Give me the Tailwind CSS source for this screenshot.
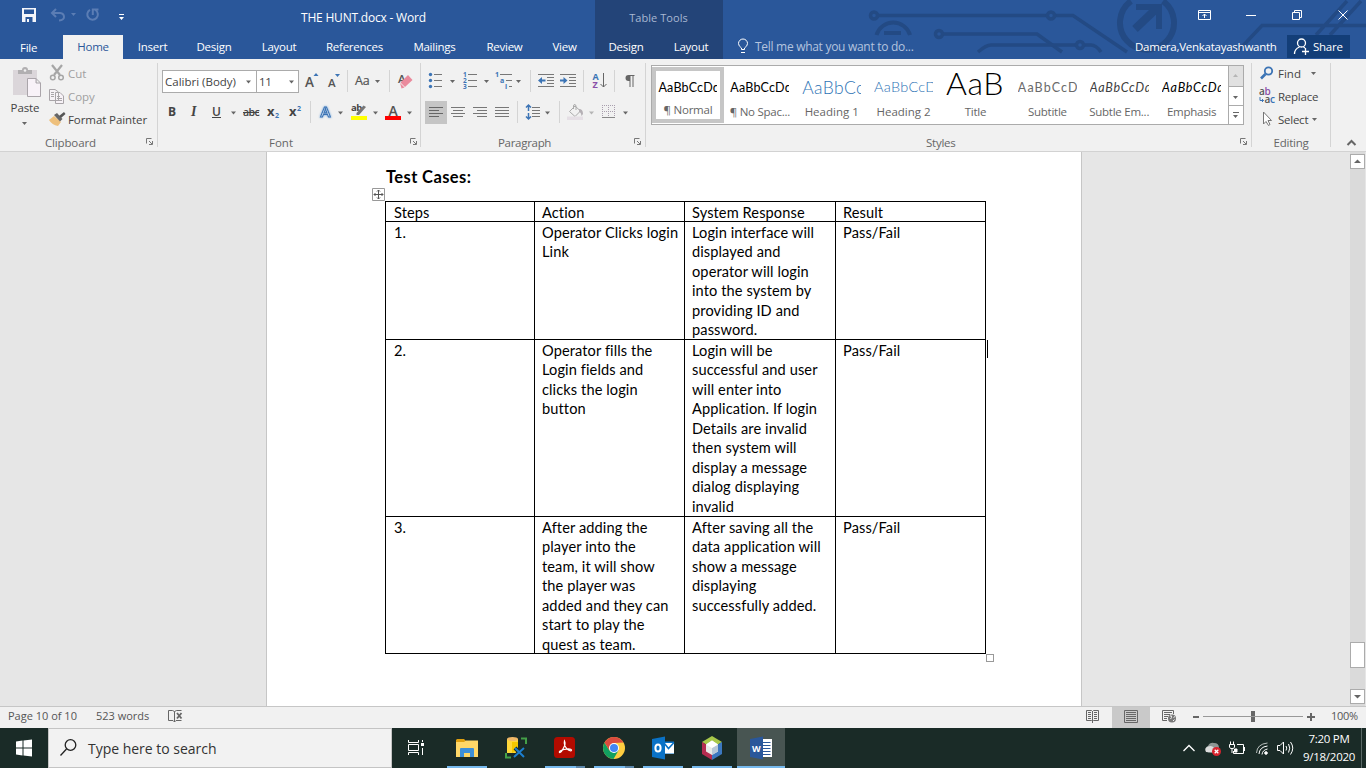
<!DOCTYPE html>
<html lang="en">
<head>
<meta charset="utf-8">
<title>THE HUNT.docx - Word</title>
<script src="https://cdn.jsdelivr.net/npm/@tailwindcss/browser@4"></script>
</head>
<body class="w-[1366px] h-[768px] overflow-hidden bg-[#e6e6e6] font-['Open_Sans','Noto_Sans',sans-serif] text-[11.5px] tracking-[-0.25px] text-[#444] flex flex-col whitespace-nowrap">

<!-- Title bar and tabs -->
<header class="relative flex h-[59px] shrink-0 bg-[#2a579a] text-white">
  <svg class="absolute left-[860px] top-0" width="506" height="59" viewBox="860 0 506 59" fill="none" stroke="#234a84" stroke-width="3.5">
    <circle cx="874" cy="15.500" r="3.500"/><path d="M878 15.500H1047M1055 15.500H1073L1127 52"/><circle cx="1051" cy="15.500" r="3.500"/>
    <circle cx="939" cy="34" r="3.500"/><path d="M943 34H1037L1062 52"/>
    <path d="M876.500 35A17.500 17.500 0 0 1 910 35M884 33H901" stroke-width="4"/>
    <path d="M978 52Q986 45 991 45H1076M1084 45H1091Q1096 45 1101 52"/><circle cx="1080" cy="45" r="3.500"/>
    <path d="M1131 1A27 27 0 1 0 1163 1" stroke-width="6"/>
    <path d="M1135 29L1157 8" stroke-width="8"/><path d="M1136 7H1159V29" stroke-width="6"/>
    <path d="M1239 50L1262 25.500H1366M1316 35L1347 1M1330 35L1361 1"/>
  </svg>
  <div class="relative w-[595px] flex flex-col">
    <div class="h-[35px] flex items-start">
      <svg width="301" height="35" viewBox="0 0 301 35" fill="none">
        <path d="M22 8H36V22H22Z" fill="#f4f6fa"/><path d="M24 9.500H34V14H24Z M25.500 17H32.500V22H25.500Z" fill="#2a579a"/><path d="M27 19H29V22H27Z" fill="#f4f6fa"/>
        <g stroke="#5b7db4" stroke-width="2"><path d="M56 9L52 13L56 17M52.500 13H60Q64 13.500 64 17Q64 20 59 20.500"/><path d="M90 9.800A5.300 5.300 0 1 0 95.500 10M92.800 15V9.500H98.500"/></g>
        <path d="M71 13H76L73.500 16Z" fill="#5b7db4"/><path d="M119 14H124V15H119ZM119 17H124L121.500 20Z" fill="#fff"/>
      </svg>
      <span class="mt-[10px] text-[12px] leading-4 tracking-[-0.2px]">THE HUNT.docx - Word</span>
    </div>
    <nav class="h-6 flex text-center leading-6">
      <span class="w-[63px] text-left pl-5 pt-px">File</span>
      <span class="w-[60px] bg-[#f1f1f1] text-[#2a579a]">Home</span>
      <span class="w-[59px]">Insert</span><span class="w-[64px]">Design</span><span class="w-[66px]">Layout</span><span class="w-[85px]">References</span><span class="w-[75px]">Mailings</span><span class="w-[65px]">Review</span><span class="w-[55px]">View</span>
    </nav>
  </div>
  <div class="relative w-[128px] flex flex-col bg-[#234478] text-center">
    <div class="h-[35px] leading-[36px] text-[#a9b8d2] text-[11px] tracking-[0.05px] pr-px">Table Tools</div>
    <nav class="flex leading-6"><span class="w-[62px]">Design</span><span class="w-[68px] -mr-1">Layout</span></nav>
  </div>
  <div class="relative flex-1 flex flex-col">
    <svg class="ml-[467px]" width="176" height="35" viewBox="1190 0 176 35" fill="none" stroke="#fff"><path d="M1198.500 10.500H1210.500V19.500H1198.500ZM1198 12.500H1211M1204.500 18V14M1202.500 16L1204.500 14L1206.500 16M1246 15.500H1256M1292.500 12.500H1299.500V19.500H1292.500ZM1294.500 12V10.500H1301.500V17.500H1300M1338.500 10.500L1347.500 19.500M1347.500 10.500L1338.500 19.500"/></svg>
    <div class="h-6 flex leading-6">
      <svg class="ml-[14px]" width="18" height="24" viewBox="737 35 18 24" fill="none" stroke="#fff"><path d="M741.500 49.500V48Q738.500 46 738.500 43.500A4.500 4.500 0 0 1 747.500 43.500Q747.500 46 744.500 48V49.500ZM741 52.500H745"/></svg>
      <span class="w-[380px] text-[#b4c4df] text-[12px] tracking-[-0.29px]">Tell me what you want to do...</span>
      <span class="w-[152px]">Damera,Venkatayashwanth</span>
      <div class="w-[63px] h-[23px] bg-[#133e78] flex">
        <svg width="26" height="23" viewBox="1287 35 26 23" fill="none" stroke="#fff" stroke-width="1.300"><circle cx="1301.500" cy="43" r="4"/><path d="M1294.500 54Q1294.500 49 1299.500 47M1303.500 47L1305 48M1305.500 48V55M1302 51.500H1309"/></svg>
        <span>Share</span>
      </div>
    </div>
  </div>
</header>

<!-- Ribbon -->
<section class="h-[93px] shrink-0 flex bg-[#f1f1f1] border-b border-[#d2d2d2] pt-1">
  <!-- Clipboard -->
  <div class="w-[158px] h-[84px] flex flex-col border-r border-[#d4d4d4]">
    <div class="h-[73px] flex">
      <div class="w-[49px] flex flex-col items-center">
        <svg width="49" height="36" viewBox="0 63 49 36"><path d="M13 70H37V95H13Z" fill="#dbd6da"/><path d="M18 70V74H32V70H28Q28 67 25 67Q22 67 22 70Z" fill="#b1afb1"/><circle cx="25" cy="70.500" r="1.300" fill="#f1f1f1"/><path d="M27.500 78.500H36L40.500 83V96.500H27.500ZM36 78.500V83H40.500" fill="#f8f2f8" stroke="#aaa5aa"/></svg>
        <span class="leading-[18px] pl-px text-[11.5px] tracking-[-0.1px] text-[#444]">Paste</span>
        <svg width="49" height="10" viewBox="0 117 49 10"><path d="M22 122H27L24.500 125Z" fill="#666"/></svg>
      </div>
      <div class="flex flex-col leading-[23px] text-[11.5px] tracking-[-0.08px] -mt-px">
        <div class="flex h-[23px] text-[#a0a0a0]"><svg width="19" height="23" viewBox="49 62 19 23" fill="none" stroke="#a6a6a6" stroke-width="1.500"><path d="M52 65L60 75M62 65L54 75" stroke-width="2.200"/><circle cx="52.800" cy="77.500" r="2.300"/><circle cx="61" cy="77.500" r="2.300"/></svg><span>Cut</span></div>
        <div class="flex h-[23px] text-[#a0a0a0]"><svg width="19" height="23" viewBox="49 85 19 23" fill="#f7f2f7" stroke="#a9a5a9"><path d="M49.500 89.500H55L58.500 92V100.500H49.500ZM55.500 92.500H60L63.500 96V103.500H55.500ZM51 92.500H54M51 94.500H54M51 96.500H54M57 96.500H60M57 98.500H62M57 100.500H62"/></svg><span>Copy</span></div>
        <div class="flex h-[23px]"><svg width="19" height="23" viewBox="49 108 19 23"><path d="M49 120L54 116L61 122L58 126Q52 125 49 120Z" fill="#eec07c"/><path d="M54 115L57 113L62.500 119L60 121.500Z" fill="#666"/><path d="M59 116L64 112L65.500 114L61 118Z" fill="#555"/></svg><span>Format Painter</span></div>
      </div>
    </div>
    <div class="flex h-[11px] items-center pl-[45px]"><span class="w-[100px] pt-[2px] text-[#666] tracking-[-0.15px]">Clipboard</span>
      <svg width="9" height="9" viewBox="0 0 9 9" fill="none" stroke="#777"><path d="M1.500 6.500V1.500H6.500M4 4L7 7M7.500 4V7.500H4"/></svg></div>
  </div>
  <!-- Font -->
  <div class="w-[263px] h-[84px] flex flex-col border-r border-[#d4d4d4] pl-1">
    <div class="h-[31px] flex pt-[7px]">
      <div class="w-[95px] h-[23px] -mr-px border border-[#ababab] bg-white flex leading-[22px] pl-[2px]"><span class="w-[80px] text-[11.5px] tracking-[0px]">Calibri (Body)</span><svg width="8" height="21" viewBox="0 0 8 21"><path d="M1 9.500H6L3.500 12.500Z" fill="#666"/></svg></div>
      <div class="w-[43px] h-[23px] border border-[#ababab] bg-white flex leading-[22px] pl-[2px]"><span class="w-[29px]">11</span><svg width="8" height="21" viewBox="0 0 8 21"><path d="M1 9.500H6L3.500 12.500Z" fill="#666"/></svg></div>
      <svg width="24" height="23" viewBox="299 70 24 23"><text x="305" y="86.500" font-size="13.500" font-weight="600" fill="#555">A</text><path d="M313.500 76H318.500L316 73Z" fill="#3c74b5"/></svg>
      <svg width="24" height="23" viewBox="323 70 24 23"><text x="328" y="86.500" font-size="11.500" font-weight="600" fill="#555">A</text><path d="M335 74H340L337.500 77Z" fill="#3c74b5"/></svg>
      <svg width="43" height="23" viewBox="347 70 43 23"><path d="M347.500 70V92M389.500 70V92" stroke="#d4d4d4"/><text x="355" y="85" font-size="12.500" fill="#555" stroke="#555" stroke-width=".2">Aa</text><path d="M375 80H380L377.500 83Z" fill="#666"/></svg>
      <svg width="30" height="23" viewBox="390 70 30 23"><text x="398" y="82.500" font-size="11.500" font-weight="600" fill="#555">A</text><path d="M408 75L412.500 80L405 87L400.500 82.500Z" fill="#ea8a9c"/><path d="M400 83L404.500 87.500L401.500 88.500Z" fill="#ea8a9c"/></svg>
    </div>
    <div class="h-[42px] flex pt-[7px] text-[#555]">
      <svg width="24" height="23" viewBox="162 101 24 23" fill="#444"><text x="168" y="116" font-size="12" font-weight="700">B</text></svg>
      <svg width="20" height="23" viewBox="186 101 20 23" fill="#444"><text x="191" y="116" font-family="Liberation Serif" font-size="14" font-style="italic" font-weight="600">I</text></svg>
      <svg width="33" height="23" viewBox="206 101 33 23" fill="#444"><text x="212" y="116" font-size="12" font-weight="600">U</text><path d="M212 117H221V118H212Z"/><path d="M231 111.500H236L233.500 114.500Z" fill="#666"/></svg>
      <svg width="24" height="23" viewBox="239 101 24 23" fill="#444"><text x="243" y="116" font-size="10.500" letter-spacing="-.6" font-weight="600">abc</text><path d="M243 112H259V113H243Z"/></svg>
      <svg width="22" height="23" viewBox="263 101 22 23" fill="#444"><text x="267" y="116" font-size="13" font-weight="700">x</text><text x="275" y="118" font-size="7" font-weight="700" fill="#3c74b5">2</text></svg>
      <svg width="22" height="23" viewBox="285 101 22 23" fill="#444"><text x="289" y="116" font-size="13" font-weight="700">x</text><text x="297" y="111" font-size="7" font-weight="700" fill="#3c74b5">2</text></svg>
      <svg width="40" height="23" viewBox="307 101 40 23"><path d="M310.500 101V123" stroke="#d4d4d4"/><text x="320.500" y="117" font-size="15" font-weight="600" fill="#fff" stroke="#3c74b5" stroke-width="1.100" class="drop-shadow-[0_0_1px_#6da3dc]">A</text><path d="M338 111.500H343L340.500 114.500Z" fill="#666"/></svg>
      <svg width="34" height="23" viewBox="347 101 34 23"><text x="351" y="111" font-size="9.500" font-weight="700" letter-spacing="-.5" fill="#444">ab</text><path d="M366 107L359 115H356.500V113L363.500 105.500Z" fill="#777"/><path d="M351 116H367V120H351Z" fill="#ff0"/><path d="M373 111.500H378L375.500 114.500Z" fill="#666"/></svg>
      <svg width="39" height="23" viewBox="381 101 39 23"><text x="388.500" y="115.500" font-size="14" font-weight="600" fill="#555">A</text><path d="M385 116H401V120H385Z" fill="#f00"/><path d="M407 111.500H412L409.500 114.500Z" fill="#666"/></svg>
    </div>
    <div class="flex h-[11px] items-center pl-[107px]"><span class="w-[140px] pt-[2px] text-[#666] tracking-[0px]">Font</span>
      <svg width="9" height="9" viewBox="0 0 9 9" fill="none" stroke="#777"><path d="M1.500 6.500V1.500H6.500M4 4L7 7M7.500 4V7.500H4"/></svg></div>
  </div>
  <!-- Paragraph -->
  <div class="w-[225px] h-[84px] flex flex-col border-r border-[#d4d4d4]">
    <div class="h-[31px] flex pt-[7px]">
      <svg width="39" height="23" viewBox="421 70 39 23"><g fill="#3c74b5"><circle cx="430.500" cy="74.500" r="1.700"/><circle cx="430.500" cy="80.500" r="1.700"/><circle cx="430.500" cy="86.500" r="1.700"/></g><path d="M434 74.500H442M434 80.500H442M434 86.500H442" stroke="#777"/><path d="M450 80H455L452.500 83Z" fill="#666"/></svg>
      <svg width="32" height="23" viewBox="460 70 32 23"><g fill="#3c74b5" font-size="6.500" font-weight="700"><text x="463" y="77">1</text><text x="463" y="83">2</text><text x="463" y="89">3</text></g><path d="M468 74.500H477M468 80.500H477M468 86.500H477" stroke="#777"/><path d="M484 80H489L486.500 83Z" fill="#666"/></svg>
      <svg width="36" height="23" viewBox="492 70 36 23"><g fill="#3c74b5" font-size="7" font-weight="700"><text x="495" y="77">1</text><text x="500" y="83">a</text><text x="505" y="89">i</text></g><path d="M500 74.500H512M506 80.500H512M509 86.500H512" stroke="#777"/><path d="M516 80H521L518.500 83Z" fill="#666"/></svg>
      <svg width="29" height="23" viewBox="528 70 29 23"><path d="M530.500 70V92" stroke="#d4d4d4"/><path d="M538 74.500H554M547 77.500H554M547 80.500H554M547 83.500H554M538 86.500H554" stroke="#777"/><path d="M538 80.500L542 77V79.500H545.500V81.500H542V84Z" fill="#3c74b5"/></svg>
      <svg width="25" height="23" viewBox="557 70 25 23"><path d="M560 74.500H576M569 77.500H576M569 80.500H576M569 83.500H576M560 86.500H576" stroke="#777"/><path d="M567.500 80.500L563.500 77V79.500H560V81.500H563.500V84Z" fill="#3c74b5"/></svg>
      <svg width="32" height="23" viewBox="582 70 32 23"><path d="M583.500 70V92" stroke="#d4d4d4"/><text x="592.500" y="79.500" font-size="9" font-weight="700" fill="#3c74b5">A</text><text x="592.500" y="88" font-size="9" font-weight="700" fill="#8a4fa8">Z</text><path d="M603.500 73V87M600.500 84L603.500 87L606.500 84" fill="none" stroke="#666"/></svg>
      <svg width="31" height="23" viewBox="614 70 31 23"><path d="M614.500 70V92" stroke="#d4d4d4"/><path d="M634.500 75H628.500A3 3 0 0 0 628.500 81H629.500V87H630.500V76H632.500V87H633.500V76H634.500Z" fill="#666"/></svg>
    </div>
    <div class="h-[42px] flex pt-[7px] pl-1">
      <svg class="bg-[#c5c5c5]" width="22" height="23" viewBox="425 101 22 23" stroke="#666"><path d="M429 107.500H443M429 110.500H439M429 113.500H443M429 116.500H439"/></svg>
      <svg width="22" height="23" viewBox="447 101 22 23" stroke="#777"><path d="M451 107.500H465M453 110.500H463M451 113.500H465M453 116.500H463"/></svg>
      <svg width="22" height="23" viewBox="469 101 22 23" stroke="#777"><path d="M473 107.500H487M477 110.500H487M473 113.500H487M477 116.500H487"/></svg>
      <svg width="24" height="23" viewBox="491 101 24 23" stroke="#777"><path d="M495 107.500H509M495 110.500H509M495 113.500H509M495 116.500H509"/></svg>
      <svg width="40" height="23" viewBox="515 101 40 23" fill="none"><path d="M517.500 101V123" stroke="#d4d4d4"/><path d="M528.500 105V111M526 107.500L528.500 105L531 107.500M528.500 113V119M526 116.500L528.500 119L531 116.500" stroke="#3c74b5" stroke-width="1.500"/><path d="M532 107.500H540M532 110.500H540M532 113.500H540M532 116.500H540" stroke="#777"/><path d="M545 111.500H550L547.500 114.500Z" fill="#666"/></svg>
      <svg width="43" height="23" viewBox="555 101 43 23" fill="none"><path d="M559.500 101V123" stroke="#d4d4d4"/><path d="M575 106L569.500 111.500L575 116.500L580.500 111ZM573.500 109V106Q573.500 104.500 575 104.500Q576 104.500 576 107V110" stroke="#aaa"/><path d="M579 109Q583 109 583 114L581.500 116Q581 112 579 112Z" fill="#b5b0b5"/><path d="M567 116.500H583V120H567Z" fill="#e5dfe5"/><path d="M589 111.500H594L591.500 114.500Z" fill="#b5b5b5"/></svg>
      <svg width="40" height="23" viewBox="598 101 40 23" fill="none"><path d="M602 105.500H615M602 111.500H615M602.500 105V117M608.500 105V117M614.500 105V117" stroke="#a99fae" stroke-dasharray="1 1"/><path d="M602 117.500H615" stroke="#888"/><path d="M623 111.500H628L625.500 114.500Z" fill="#666"/></svg>
    </div>
    <div class="flex h-[11px] items-center pl-[77px]"><span class="w-[135px] pt-[2px] text-[#666] tracking-[-0.3px]">Paragraph</span>
      <svg width="9" height="9" viewBox="0 0 9 9" fill="none" stroke="#777"><path d="M1.500 6.500V1.500H6.500M4 4L7 7M7.500 4V7.500H4"/></svg></div>
  </div>
  <!-- Styles -->
  <div class="w-[606px] h-[84px] flex flex-col border-r border-[#d4d4d4] pl-[5px]">
    <div class="h-[73px] pt-[2px]">
      <div class="w-[593px] h-[60px] border border-[#ababab] bg-white flex text-center text-[#666]">
        <div class="w-[72px] h-[56px] mt-px border-4 border-[#c6c6c6] flex flex-col items-center"><div class="w-[59px] h-[32px] leading-[34px] overflow-hidden text-left font-[Lato] text-[12.5px] tracking-[0.2px] text-black">AaBbCcDd</div><span class="leading-[18px]">¶ Normal</span></div>
        <div class="w-[72px] pt-[5px] flex flex-col items-center"><div class="w-[59px] h-[32px] leading-[34px] overflow-hidden text-left font-[Lato] text-[12.5px] tracking-[0.2px] text-black">AaBbCcDd</div><span class="leading-[18px]">¶ No Spac...</span></div>
        <div class="w-[72px] pt-[5px] flex flex-col items-center"><div class="w-[59px] h-[32px] leading-[33px] overflow-hidden text-left font-[Lato] font-light text-[17.5px] tracking-[0.4px] text-[#2e74b5]">AaBbCc</div><span class="leading-[18px] tracking-[0px]">Heading 1</span></div>
        <div class="w-[72px] pt-[5px] flex flex-col items-center"><div class="w-[59px] h-[32px] leading-[32px] overflow-hidden text-left font-[Lato] font-light text-[14.5px] tracking-[0.25px] text-[#2e74b5]">AaBbCcD</div><span class="leading-[18px] tracking-[0px]">Heading 2</span></div>
        <div class="w-[72px] pt-[5px] flex flex-col items-center"><div class="w-[59px] h-[32px] leading-[23px] overflow-hidden text-left font-[Lato] font-light text-[32px] tracking-[0.6px] text-black">AaB</div><span class="leading-[18px]">Title</span></div>
        <div class="w-[72px] pt-[5px] flex flex-col items-center"><div class="w-[59px] h-[32px] leading-[34px] overflow-hidden text-left font-[Lato] text-[12.5px] tracking-[1.1px] text-[#6a6a6a]">AaBbCcD</div><span class="leading-[18px]">Subtitle</span></div>
        <div class="w-[72px] pt-[5px] flex flex-col items-center"><div class="w-[59px] h-[32px] leading-[34px] overflow-hidden text-left font-[Lato] italic text-[12.5px] tracking-[0.75px] text-[#404040]">AaBbCcDd</div><span class="leading-[18px]">Subtle Em...</span></div>
        <div class="w-[73px] pt-[5px] flex flex-col items-center"><div class="w-[59px] h-[32px] leading-[34px] overflow-hidden text-left font-[Lato] italic text-[12.5px] tracking-[0.75px] text-black">AaBbCcDd</div><span class="leading-[18px]">Emphasis</span></div>
        <div class="w-[15px] border-l border-[#ababab] flex flex-col">
          <div class="h-[21px] bg-[#e1e1e1] border-b border-[#ababab]"><svg width="14" height="20"><path d="M4 11H9L6.500 8Z" fill="#b5b5b5"/></svg></div>
          <div class="h-[19px] border-b border-[#ababab]"><svg width="14" height="18"><path d="M4 9H9L6.500 12Z" fill="#666"/></svg></div>
          <svg width="14" height="18"><path d="M4 6H10V7H4ZM4 9H9L6.500 12Z" fill="#666"/></svg>
        </div>
      </div>
    </div>
    <div class="flex h-[11px] items-center pl-[275px]"><span class="w-[313px] pt-[2px] text-[#666]">Styles</span>
      <svg width="9" height="9" viewBox="0 0 9 9" fill="none" stroke="#777"><path d="M1.500 6.500V1.500H6.500M4 4L7 7M7.500 4V7.500H4"/></svg></div>
  </div>
  <!-- Editing -->
  <div class="w-[79px] h-[84px] flex flex-col border-r border-[#d4d4d4]">
    <div class="h-[73px] flex flex-col leading-[23px] -mt-px mb-px">
      <div class="flex h-[23px]"><svg width="26" height="23" viewBox="1252 62 26 23" fill="none" stroke="#3c74b5"><circle cx="1268.500" cy="71" r="3.700" stroke-width="1.800"/><path d="M1265.500 74L1261 78.500" stroke-width="2.600"/></svg><span class="w-[33px] tracking-[0px]">Find</span><svg width="8" height="23"><path d="M0 10H5L2.500 13Z" fill="#666"/></svg></div>
      <div class="flex h-[23px]"><svg width="26" height="23" viewBox="1252 85 26 23"><g font-size="10" font-weight="600"><text x="1259" y="94.500" fill="#555" letter-spacing="-.3">a<tspan fill="#8a4fa8">b</tspan></text><text x="1264.500" y="103" fill="#555" letter-spacing="-.3">a<tspan fill="#3c74b5">c</tspan></text></g><path d="M1260 97V100.500H1263.500M1262 99L1263.500 100.500L1262 102" fill="none" stroke="#3c74b5"/></svg><span>Replace</span></div>
      <div class="flex h-[23px]"><svg width="26" height="23" viewBox="1252 108 26 23"><path d="M1263.500 112V124L1266 121.500L1268.500 125.500L1270 124.500L1268 120.500H1271.500Z" fill="#fff" stroke="#777"/></svg><span class="w-[34px]">Select</span><svg width="8" height="23"><path d="M0 10H5L2.500 13Z" fill="#666"/></svg></div>
    </div>
    <div class="flex h-[11px] items-center justify-center pt-[2px] text-[#666]">Editing</div>
  </div>
  <svg width="35" height="84" viewBox="1331 63 35 84"><path d="M1347.500 145L1351.500 141L1355.500 145" fill="none" stroke="#666" stroke-width="2"/></svg>
</section>

<!-- Document -->
<main class="h-[554px] shrink-0 flex">
  <div class="relative ml-[266px] w-[816px] border-x border-[#c6c6c6] bg-white pl-[118px] pt-[15px] text-black font-[Lato,'Open_Sans',sans-serif] [font-variant-ligatures:none] text-[14.6px] leading-[19.45px] tracking-[0.1px]">
    <h1 class="h-[34px] pl-[1px] leading-[20px] font-bold text-[16.5px] tracking-[0.4px]">Test Cases:</h1>
    <table class="border-collapse table-fixed w-[601px]">
      <colgroup><col class="w-[149px]"><col class="w-[150px]"><col class="w-[151px]"><col class="w-[150px]"></colgroup>
      <tbody>
        <tr class="h-[20px] align-top"><td class="border border-black p-0 pl-2"><div class="h-[19px] pt-px">Steps</div></td><td class="border border-black p-0 pl-[7px]"><div class="h-[19px] pt-px">Action</div></td><td class="border border-black p-0 pl-[7px]"><div class="h-[19px] pt-px">System Response</div></td><td class="border border-black p-0 pl-[7px]"><div class="h-[19px] pt-px">Result</div></td></tr>
        <tr class="h-[118px] align-top"><td class="border border-black p-0 pl-2"><div class="h-[117px] pt-px">1.</div></td><td class="border border-black p-0 pl-[7px]"><div class="h-[117px] pt-px">Operator Clicks login<br>Link</div></td><td class="border border-black p-0 pl-[7px]"><div class="h-[117px] pt-px">Login interface will<br>displayed and<br>operator will login<br>into the system by<br>providing ID and<br>password.</div></td><td class="border border-black p-0 pl-[7px]"><div class="h-[117px] pt-px">Pass/Fail</div></td></tr>
        <tr class="h-[177px] align-top"><td class="border border-black p-0 pl-2"><div class="h-[176px] pt-px">2.</div></td><td class="border border-black p-0 pl-[7px]"><div class="h-[176px] pt-px">Operator fills the<br>Login fields and<br>clicks the login<br>button</div></td><td class="border border-black p-0 pl-[7px]"><div class="h-[176px] pt-px">Login will be<br>successful and user<br>will enter into<br>Application. If login<br>Details are invalid<br>then system will<br>display a message<br>dialog displaying<br>invalid</div></td><td class="border border-black p-0 pl-[7px]"><div class="h-[176px] pt-px">Pass/Fail</div></td></tr>
        <tr class="h-[137px] align-top"><td class="border border-black p-0 pl-2"><div class="h-[136px] pt-px">3.</div></td><td class="border border-black p-0 pl-[7px]"><div class="h-[136px] pt-px">After adding the<br>player into the<br>team, it will show<br>the player was<br>added and they can<br>start to play the<br>quest as team.</div></td><td class="border border-black p-0 pl-[7px]"><div class="h-[136px] pt-px">After saving all the<br>data application will<br>show a message<br>displaying<br>successfully added.</div></td><td class="border border-black p-0 pl-[7px]"><div class="h-[136px] pt-px">Pass/Fail</div></td></tr>
      </tbody>
    </table>
    <svg class="absolute left-[105px] top-[36px]" width="13" height="13" viewBox="0 0 13 13" fill="none" stroke="#999"><path d="M.5.500H12.500V12.500H.5Z" fill="#fff"/><path d="M6.500 2V11M2 6.500H11M5 3.500L6.500 2L8 3.500M5 9.500L6.500 11L8 9.500M3.500 5L2 6.500L3.500 8M9.500 5L11 6.500L9.500 8" stroke="#555"/></svg>
    <div class="absolute left-[720px] top-[188px] w-px h-[18px] bg-black"></div>
    <div class="absolute left-[719px] top-[502px] w-2 h-2 border border-[#999] bg-white"></div>
  </div>
  <div class="ml-[268px] w-[15px] bg-[#dadada] flex flex-col pt-[2px]">
    <div class="size-[15px] border border-[#ababab] bg-white"><svg width="13" height="13"><path d="M3 8H10L6.500 4.500Z" fill="#666"/></svg></div>
    <div class="mt-[473px] h-[26px] border border-[#ababab] bg-white"></div>
    <div class="mt-[21px] size-[15px] border border-[#ababab] bg-white"><svg width="13" height="13"><path d="M3 5H10L6.500 8.500Z" fill="#666"/></svg></div>
  </div>
</main>

<!-- Status bar -->
<footer class="h-[22px] shrink-0 flex bg-[#f1f1f1] border-t border-[#c6c6c6] leading-[18px] pl-2 text-[#555] text-[11px] tracking-[0px]">
  <span class="w-[88px]">Page 10 of 10</span><span class="w-[71px]">523 words</span>
  <svg width="16" height="21" viewBox="167 707 16 21" fill="none" stroke="#666"><path d="M172.500 710.500H168.500V720.500H173L174.500 722L176 720.500H181.500M174.500 722V711.500L172.500 710.500M174.500 711.500L176.500 710.500H181.500"/><path d="M177 713L181.500 718.500M181.500 713L177 718.500" stroke-width="1.800"/></svg>
  <svg class="ml-[897px]" width="32" height="21" viewBox="1080 707 32 21" fill="none" stroke="#666"><path d="M1086.500 710.500H1091.500L1092.500 711.500L1093.500 710.500H1098.500V720.500H1093.500L1092.500 721.500L1091.500 720.500H1086.500ZM1092.500 711V723M1088 712.500H1091M1088 714.500H1091M1088 716.500H1091M1088 718.500H1091M1094 712.500H1097M1094 714.500H1097M1094 716.500H1097M1094 718.500H1097"/></svg>
  <svg class="bg-[#c9c9c9]" width="38" height="21" viewBox="1112 707 38 21" fill="none" stroke="#666"><path d="M1124.500 710.500H1137.500V722.500H1124.500ZM1126 712.500H1136M1126 714.500H1136M1126 716.500H1136M1126 718.500H1136M1126 720.500H1136"/></svg>
  <svg width="33" height="21" viewBox="1150 707 33 21" fill="none" stroke="#666"><path d="M1167 720.500H1162.500V710.500H1173.500V714M1164 712.500H1172M1164 714.500H1170M1164 716.500H1168M1164 718.500H1167"/><circle cx="1172" cy="718.500" r="4" fill="#777" stroke="none"/><path d="M1170 716Q1172 715 1171.500 717.500L1170.500 719M1173.500 717.500L1175 716.500M1173 721L1174.500 719.500" stroke="#f1f1f1"/></svg>
  <svg width="148" height="21" viewBox="1183 707 148 21" fill="#666"><path d="M1193 716H1199V718H1193ZM1307 716H1315V718H1307ZM1310 713H1312V721H1310ZM1251 711H1255V722H1251Z"/><path d="M1203 716H1303V717H1203Z" fill="#999"/></svg>
  <span class="tracking-[-0.3px]">100%</span>
</footer>

<!-- Taskbar -->
<div class="h-10 shrink-0 flex bg-[#1a2b27] text-white">
  <svg width="48" height="40" viewBox="0 728 48 40" fill="#fff"><path d="M16 741.500L22.500 740.500V747.500H16ZM23.500 740.400L32 739.500V747.500H23.500ZM16 748.500H22.500V755.500L16 754.500ZM23.500 748.500H32V756.500L23.500 755.600Z"/></svg>
  <div class="w-[344px] h-10 bg-[#f2f2f2] border border-[#c4c4c4] flex text-[#333] text-[14px] leading-[40px] tracking-[-0.02px]">
    <svg width="39" height="38" viewBox="49 729 39 38" fill="none" stroke="#222" stroke-width="1.300"><circle cx="70.500" cy="745" r="5.300"/><path d="M66.500 749L60.500 755.500"/></svg>
    <span>Type here to search</span>
  </div>
  <svg width="55" height="40" viewBox="392 728 55 40" fill="none" stroke="#fff"><path d="M408.500 740V742.500H418.500V740M408.500 755V752.500H418.500V755M408.500 744.500H418.500V750.500H408.500ZM422.500 740V742M422.500 748V755"/><path d="M421 743H424V746H421Z" fill="#fff" stroke="none"/></svg>
  <svg width="49" height="40" viewBox="447 728 49 40"><path d="M457 739H464L466 741H477V757H456V740Z" fill="#e0a010"/><path d="M456 742H464L466 740.500H478V757H456Z" fill="#ffd768"/><path d="M460 757V749Q460 748 461 748H473Q474 748 474 749V757H470V753H464V757Z" fill="#3d8fd8"/><path d="M447 766H487V768H447Z" fill="#76b9ed"/></svg>
  <svg width="49" height="40" viewBox="496 728 49 40"><path d="M507 739V753H518V739Z" fill="#ffd83a"/><ellipse cx="512.500" cy="739" rx="5.500" ry="2" fill="#f0b868"/><path d="M512 742H518V750L512 753Z" fill="#f5c800"/><path d="M521 738.500H526V744M506 753V757.500H511" fill="none" stroke="#44a048" stroke-width="2"/><path d="M515 748L524 757M524 748L514 757" stroke="#1a2b27" stroke-width="4"/><path d="M515 748L524 757M524 748L514 757" stroke="#1d7fd0" stroke-width="2"/></svg>
  <svg width="49" height="40" viewBox="545 728 49 40"><rect x="554" y="737" width="21" height="21" rx="3.500" fill="#b30b00"/><path d="M564.500 741Q566 744 563.500 748Q561 753 559.500 752.500Q558.500 751 564 749.500Q571 748 571.500 750Q571 752 567 749Q563.500 745 564.500 741Z" fill="none" stroke="#fff" stroke-width="1.200"/><path d="M545 766H576V768H545Z" fill="#76b9ed"/><path d="M576 766H585V768H576Z" fill="#5c87aa"/></svg>
  <svg width="49" height="40" viewBox="594 728 49 40"><circle cx="614" cy="748" r="11" fill="#ffcd40"/><path d="M614 748L604.500 742.500A11 11 0 0 1 623.500 742.500L614 743Z" fill="#db4c3f"/><path d="M604.500 742.500A11 11 0 0 0 613.500 759L618.500 750.500L614 748L609.500 750.500Z" fill="#12a060"/><path d="M604.500 742.500L609.500 750.500L614 743Z" fill="#db4c3f"/><circle cx="614" cy="748" r="5" fill="#fff"/><circle cx="614" cy="748" r="4" fill="#4285f4"/><path d="M594 766H625V768H594Z" fill="#76b9ed"/><path d="M625 766H634V768H625Z" fill="#5c87aa"/></svg>
  <svg width="49" height="40" viewBox="643 728 49 40"><path d="M662 741.500H674V754H662Z" fill="#0a72c6"/><path d="M664 743H674V753.500H664Z" fill="#fff"/><path d="M664 743L668.500 748.500L674 742.500" fill="none" stroke="#0a72c6" stroke-width="1.600"/><path d="M652 739L665 736.500V759.500L652 757Z" fill="#0a72c6"/><ellipse cx="658" cy="748" rx="2.600" ry="3.500" fill="none" stroke="#fff" stroke-width="2"/><path d="M643 766H683V768H643Z" fill="#76b9ed"/></svg>
  <svg width="45" height="40" viewBox="692 728 45 40"><path d="M712 736L722 742L712 748L702 742Z" fill="#a8c84a"/><path d="M702 742L712 748V760L702 754Z" fill="#b52c50"/><path d="M722 742L712 748V760L722 754Z" fill="#3c78c0"/><path d="M712 740.500L718 744.500V751.500L712 755L706 751.500V744.500Z" fill="#e8ece8"/><path d="M712 748L718 744.500V751.500L712 755Z" fill="#b8c8d8"/><path d="M706 744.500L712 740.500L718 744.500L712 748Z" fill="#fff"/><path d="M692 766H732V768H692Z" fill="#76b9ed"/></svg>
  <svg width="48" height="40" viewBox="737 728 48 40"><path d="M737 728H785V768H737Z" fill="#485552"/><path d="M761 739H772V757H761Z" fill="#fff"/><path d="M763 742.500H770.500M763 745.500H770.500M763 748.500H770.500M763 751.500H770.500M763 754.500H770.500" stroke="#2a579a"/><path d="M750 739L763 736.500V759.500L750 757Z" fill="#2a579a"/><text x="752" y="751.500" font-size="9" font-weight="700" fill="#fff" letter-spacing="0">W</text><path d="M737 766H785V768H737Z" fill="#76b9ed"/></svg>
  <svg class="ml-[390px]" width="26" height="40" viewBox="1175 728 26 40" fill="none" stroke="#fff" stroke-width="1.300"><path d="M1183.500 751L1189 745.500L1194.500 751"/></svg>
  <svg width="26" height="40" viewBox="1201 728 26 40"><path d="M1206 751Q1204 748 1208 746Q1210 742 1214 743Q1219 743 1219 748Q1219 752 1214 752.500H1208Z" fill="#8e9694"/><path d="M1206 752Q1204 748 1208 746.500Q1212 745 1214 748V752.500Z" fill="#ddd"/><circle cx="1216.500" cy="751.500" r="4.500" fill="#d9232e"/><path d="M1214.700 749.700L1218.300 753.300M1218.300 749.700L1214.700 753.300" stroke="#fff" stroke-width="1.300"/></svg>
  <svg width="26" height="40" viewBox="1227 728 26 40" fill="none" stroke="#fff"><path d="M1237 744.500H1243.500V753.500H1233.500V751M1244.500 747V751M1230.500 741.500V744M1233.500 741.500V744M1229.500 744.500H1234.500V747L1233.500 748.500H1230.500L1229.500 747ZM1232 749V753"/><path d="M1234.500 749H1237V752H1234.500Z" fill="#fff"/></svg>
  <svg width="22" height="40" viewBox="1253 728 22 40" fill="none" stroke="#fff"><path d="M1256.500 753Q1257 744 1267.500 743" stroke="#b8bfbd"/><path d="M1259 754Q1259.500 747 1267.500 746M1262 754.500Q1262.500 750 1267.500 749"/><circle cx="1266" cy="753" r="1.300" fill="#fff"/></svg>
  <svg width="26" height="40" viewBox="1275 728 26 40" fill="none" stroke="#fff"><path d="M1277.500 745.500H1280L1283.500 742V754L1280 750.500H1277.500ZM1286 746Q1287.500 748 1286 750.500M1288.500 744Q1291 748 1288.500 752.500M1290.500 742Q1295 748 1290.500 754.500"/></svg>
  <div class="w-[56px] flex flex-col text-center leading-[18px] pt-[2px] tracking-[-0.25px]"><span>7:20 PM</span><span>9/18/2020</span></div>
  <div class="ml-[4px] w-px bg-[#5a6966]"></div>
</div>
</body>
</html>
